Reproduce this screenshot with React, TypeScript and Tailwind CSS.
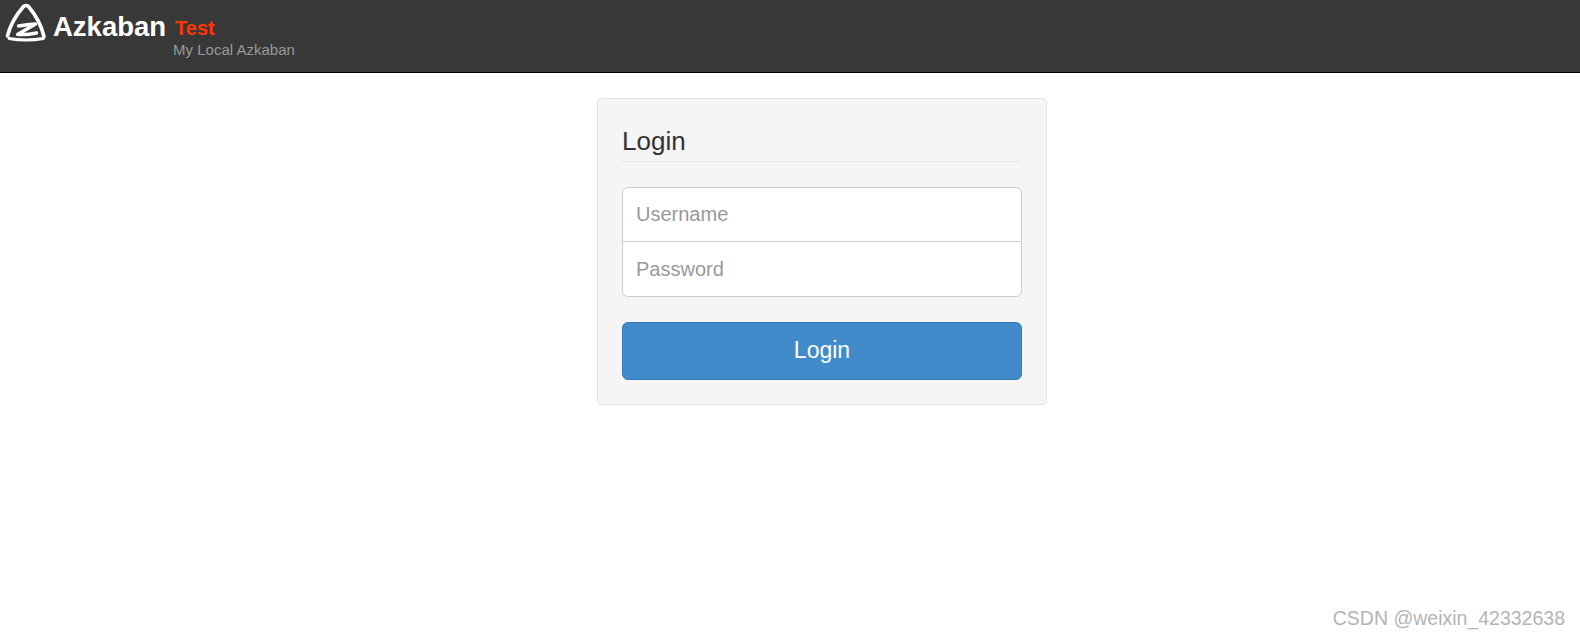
const sans = "font-['Liberation_Sans',Arial,sans-serif]"

function Logo() {
  return (
    <svg width="48" height="44" viewBox="0 0 48 44" fill="none" stroke="#fff" strokeLinecap="round" strokeLinejoin="round" className="shrink-0">
      <path d="M7.5 36 Q11 21 23.5 6.5 Q26 4.5 28.5 6.5 Q40 20 44 36.5" strokeWidth="3.6" />
      <path d="M9 38.5 Q26 41.5 43.5 38.5" strokeWidth="2.8" />
      <path d="M18.5 26 Q27 24.5 35.5 24 L17.5 34.5 Q27 35 36.5 33" strokeWidth="3.4" />
    </svg>
  )
}

export default function App() {
  return (
    <div className={`${sans} min-h-[638px] bg-white flex flex-col`}>
      <header className="h-[73px] bg-[#383838] border-b border-black flex items-start">
        <Logo />
        <span className="ml-[5px] mt-[11px] text-[27.5px] leading-[31px] font-bold text-white">Azkaban</span>
        <div className="ml-[7px] mt-[17px] flex flex-col">
          <span className="ml-[2px] text-[20px] leading-[23px] font-bold text-[#ff3601]">Test</span>
          <span className="mt-[2px] text-[15px] leading-[16px] text-[#999999]">My Local Azkaban</span>
        </div>
      </header>

      <main className="flex-1 flex flex-col pl-[597px] pt-[25px]">
        <div className="w-[450px] h-[307px] bg-[#f5f5f5] border border-[#e3e3e3] rounded-[4px] px-[24px] pt-[26px]">
          <h3 className="text-[26px] leading-[33px] text-[#333333] border-b border-[#e5e5e5] pb-[3px]">Login</h3>
          <div className="mt-[25px] rounded-[6px] border border-[#cccccc] bg-white">
            <div className="h-[54px] px-[13px] pb-[2px] flex items-center text-[20px] text-[#999999] border-b border-[#cccccc]">Username</div>
            <div className="h-[54px] px-[13px] flex items-center text-[20px] text-[#999999]">Password</div>
          </div>
          <button className="mt-[25px] w-full h-[58px] pb-[2px] rounded-[6px] bg-[#428bca] border border-[#357ebd] text-[23px] text-white">Login</button>
        </div>
      </main>

      <div className="absolute top-[606px] right-[15px] text-[19.5px] leading-[24px] text-[#b4b4b4]">CSDN @weixin_42332638</div>
    </div>
  )
}
